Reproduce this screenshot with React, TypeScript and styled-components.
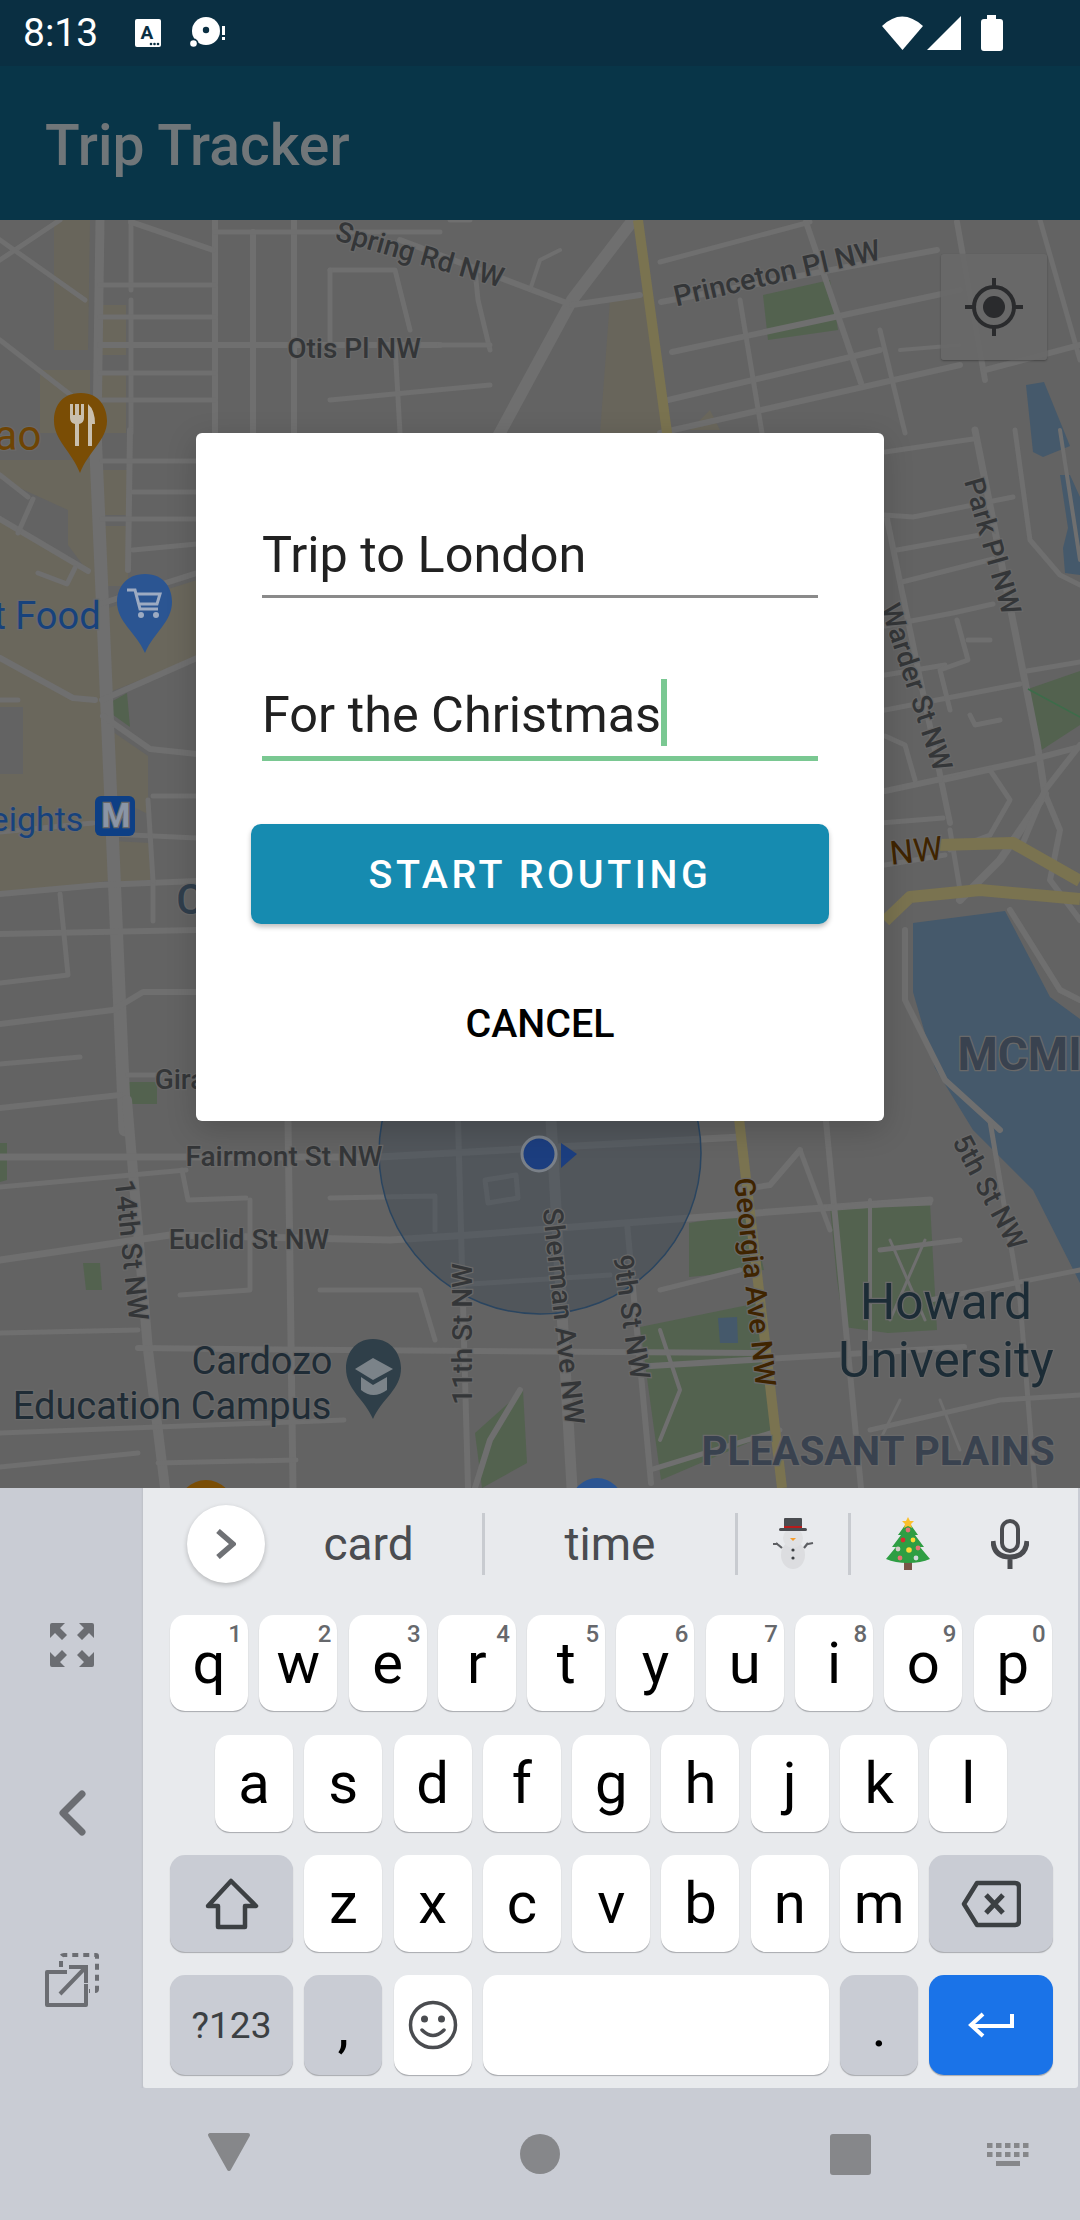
import React from 'react';
import styled, { createGlobalStyle } from 'styled-components';

const GlobalStyle = createGlobalStyle`
  html, body {
    margin: 0;
    padding: 0;
    background: #c9ccd4;
  }
  * {
    box-sizing: border-box;
  }
`;

const Page = styled.div`
  width: 1080px;
  height: 2220px;
  display: flex;
  flex-direction: column;
  overflow: hidden;
  font-family: Roboto, 'Liberation Sans', sans-serif;
`;

const StatusBar = styled.div`
  height: 66px;
  flex: none;
  display: flex;
  align-items: center;
  padding: 0 77px 0 23px;
  background: #0a2f42;
  color: #fff;
`;

const Clock = styled.span`
  font-size: 39px;
  line-height: 66px;
  margin-right: 37px;
`;

const StatusGlyph = styled.svg<{ $ml?: number; $mr?: number }>`
  flex: none;
  margin-left: ${(p) => p.$ml || 0}px;
  margin-right: ${(p) => p.$mr || 0}px;
`;

const StatusRight = styled.div`
  display: flex;
  align-items: center;
  margin-left: auto;
  gap: 4px;
`;

const AppBar = styled.div`
  height: 154px;
  flex: none;
  display: flex;
  align-items: center;
  padding: 5px 45px 0;
  background: #083548;
  color: #707679;
  font-size: 57px;
  font-weight: 500;
`;

const MapArea = styled.div`
  position: relative;
  height: 1268px;
  flex: none;
  background: #636363;
  overflow: hidden;
`;

const MapSvg = styled.svg`
  display: block;
  width: 1080px;
  height: 1268px;
`;

const MapLabel = styled.text<{ $size?: number; $color?: string; $weight?: number }>`
  font-family: Roboto, 'Liberation Sans', sans-serif;
  font-size: ${(p) => p.$size || 28}px;
  font-weight: ${(p) => p.$weight || 500};
  fill: ${(p) => p.$color || '#343638'};
  stroke: #696969;
  stroke-width: 2.5px;
  paint-order: stroke;
  text-anchor: middle;
`;

const LocateButton = styled.div`
  position: absolute;
  top: 34px;
  left: 941px;
  width: 106px;
  height: 106px;
  display: flex;
  align-items: center;
  justify-content: center;
  background: rgba(104, 104, 104, 0.92);
  border-radius: 3px;
  box-shadow: 0 1px 2px rgba(0, 0, 0, 0.3);
`;

const Dialog = styled.div`
  position: absolute;
  top: 213px;
  left: 196px;
  width: 688px;
  height: 688px;
  display: flex;
  flex-direction: column;
  padding: 89px 55px 0;
  background: #fff;
  border-radius: 6px;
  box-shadow: 0 8px 30px rgba(0, 0, 0, 0.18);
`;

const Field = styled.div<{ $focused?: boolean }>`
  height: ${(p) => (p.$focused ? 80 : 76)}px;
  margin: ${(p) => (p.$focused ? '83px' : '0')} 11px 0;
  display: flex;
  align-items: flex-end;
  padding-bottom: ${(p) => (p.$focused ? 13 : 12)}px;
  border-bottom: ${(p) => (p.$focused ? '5px solid #7ac892' : '3px solid #8a8a8a')};
  color: #212121;
  font-size: 50.4px;
  line-height: 56px;
`;

const Caret = styled.span`
  display: inline-block;
  width: 6px;
  height: 67px;
  margin: 0 0 -3px 0;
  background: #7ac892;
`;

const PrimaryButton = styled.button`
  height: 100px;
  margin-top: 63px;
  border: 0;
  border-radius: 10px;
  background: #168bb0;
  color: #fff;
  font-family: inherit;
  font-size: 39.4px;
  font-weight: 500;
  letter-spacing: 3.6px;
  box-shadow: 0 3px 5px rgba(0, 0, 0, 0.25);
`;

const TextButton = styled.button`
  height: 100px;
  margin-top: 49px;
  border: 0;
  background: transparent;
  color: #000;
  font-family: inherit;
  font-size: 39.4px;
  font-weight: 500;
`;

const Keyboard = styled.div`
  height: 600px;
  flex: none;
  display: flex;
  background: #c9ccd4;
`;

const SidePanel = styled.div`
  width: 143px;
  flex: none;
  display: flex;
  flex-direction: column;
  align-items: center;
  padding-top: 135px;
  box-shadow: inset -2px 0 2px -1px rgba(0, 0, 0, 0.06);
`;

const SideIcon = styled.div<{ $gap: number }>`
  display: flex;
  margin-top: ${(p) => p.$gap}px;
`;

const KeyPanel = styled.div`
  flex: 1;
  margin-right: 2px;
  background: #e8eaed;
  border-radius: 0 0 3px 3px;
`;

const Suggestions = styled.div`
  height: 127px;
  position: relative;
  display: flex;
  align-items: flex-start;
  padding-top: 25px;
  color: #4a4c50;
  font-size: 46px;
`;

const MoreCircle = styled.div`
  width: 78px;
  height: 78px;
  margin: -8px 0 0 44px;
  flex: none;
  display: flex;
  align-items: center;
  justify-content: center;
  border-radius: 50%;
  background: #fff;
  box-shadow: 0 2px 5px rgba(0, 0, 0, 0.22);
`;

const Suggestion = styled.div<{ $width: number; $pad?: number }>`
  width: ${(p) => p.$width}px;
  height: 62px;
  flex: none;
  display: flex;
  align-items: center;
  justify-content: center;
  padding-right: ${(p) => p.$pad || 0}px;
  line-height: 62px;
`;

const StripDivider = styled.div`
  width: 3px;
  height: 62px;
  flex: none;
  background: #c8cbd0;
`;

const KeyRow = styled.div<{ $indent: number; $mt: number }>`
  display: flex;
  gap: 11.3px;
  margin: ${(p) => p.$mt}px 0 0 ${(p) => p.$indent}px;
`;

const Key = styled.div<{ $w?: number; $h?: number; $tone?: 'plain' | 'dark' | 'blue'; $low?: boolean }>`
  position: relative;
  width: ${(p) => p.$w || 78}px;
  height: ${(p) => p.$h || 97}px;
  flex: none;
  display: flex;
  align-items: ${(p) => (p.$low ? 'flex-end' : 'center')};
  justify-content: center;
  border-radius: 15px;
  background: ${(p) => (p.$tone === 'dark' ? '#c9ccd4' : p.$tone === 'blue' ? '#1a73e8' : '#fff')};
  box-shadow: 0 1.5px 1px -0.5px #a8aaae;
  color: #000;
  font-size: 58px;
  line-height: 97px;
`;

const KeyHint = styled.span`
  position: absolute;
  top: 5px;
  right: 6px;
  color: #66686c;
  font-size: 24px;
  font-weight: 500;
  line-height: 28px;
`;

const SymbolLabel = styled.span`
  color: #3c4043;
  font-size: 37px;
`;

const NavBar = styled.div`
  height: 132px;
  flex: none;
  position: relative;
  display: flex;
  align-items: flex-start;
  padding: 44px 50px 0 207px;
  background: #c9ccd4;
`;

const NavSlot = styled.div<{ $ml?: number; $mt?: number }>`
  display: flex;
  margin-left: ${(p) => p.$ml || 0}px;
  margin-top: ${(p) => p.$mt || 0}px;
`;

const SignalIcons = () => (
  <StatusRight>
    <StatusGlyph width="41" height="34" viewBox="0 0 41 34">
      <path d="M0 10 Q20 -9 41 10 L20.5 34 Z" fill="#fff" />
    </StatusGlyph>
    <StatusGlyph width="34" height="34" viewBox="0 0 34 34">
      <path d="M34 0 V34 H0 Z" fill="#fff" />
    </StatusGlyph>
    <StatusGlyph width="22" height="36" viewBox="0 0 22 36" $ml={16}>
      <path d="M6 0 H15 V4 H19 Q22 4 22 7 V33 Q22 36 19 36 H3 Q0 36 0 33 V7 Q0 4 3 4 H6 Z" fill="#fff" />
    </StatusGlyph>
  </StatusRight>
);

const Food = () => (
  <g>
    <path d="M81 393 C60 393 54 408 54 421 C54 440 72 452 80 473 C88 452 107 440 107 421 C107 408 100 393 81 393 Z" fill="#7a4d05" />
    <path d="M70 404 V418 Q70 423 75 424 V446 H79 V424 Q84 423 84 418 V404 H81 V415 H79 V404 H75 V415 H73 V404 Z M88 404 Q95 410 95 424 H92 V446 H88 Z" fill="#c9bfae" />
  </g>
);

const Cart = () => (
  <g>
    <path d="M145 574 C125 574 117 589 117 602 C117 622 136 632 145 653 C154 632 172 622 172 602 C172 589 165 574 145 574 Z" fill="#2b5592" />
    <path d="M127 590 H135 L140 609 H158 M137 594 H160 L157 604 H140" stroke="#9dabc2" strokeWidth="3" fill="none" />
    <circle cx="141" cy="615" r="3" fill="#9dabc2" />
    <circle cx="156" cy="615" r="3" fill="#9dabc2" />
  </g>
);

const School = () => (
  <g>
    <path d="M373 1339 C354 1339 346 1355 346 1368 C346 1390 364 1398 373 1419 C382 1398 401 1390 401 1368 C401 1355 392 1339 373 1339 Z" fill="#2f3f49" />
    <path d="M373 1358 L393 1369 L373 1380 L355 1369 Z" fill="#7b8389" />
    <path d="M361 1377 V1390 Q373 1400 387 1390 V1377 L373 1385 Z" fill="#7b8389" />
  </g>
);

// main streets: [points, stroke width]
const ROADS: [string, number][] = [
  // top band
  ['100,220 97,433', 9], ['131,220 131,290', 5], ['131,300 131,433', 5], ['215,220 215,433', 6], ['253,232 253,433', 6],
  ['294,220 294,433', 6], ['60,220 0,260', 5], ['131,222 213,250', 6], ['0,240 85,300', 5], ['0,340 90,410', 5],
  ['100,285 215,285', 5], ['100,317 215,317', 5], ['100,345 440,345', 6], ['100,373 215,373', 5], ['100,400 215,400', 5],
  ['215,232 440,232', 5], ['330,270 395,270 410,330', 5], ['330,270 330,345', 5], ['395,345 400,433', 5],
  ['633,220 572,300 496,440', 12], ['400,240 572,305', 6], ['572,305 640,295', 6], ['470,220 450,220', 5], ['530,290 540,260 560,250', 4],
  ['490,350 478,300 475,270', 5], ['440,345 490,345', 5], ['330,400 490,385', 5],
  ['661,302 937,250', 6], ['660,262 810,222', 5], ['672,352 960,290', 6], ['668,400 880,350', 6], ['660,433 960,365', 6],
  ['806,222 861,383', 6], ['957,222 985,380', 6], ['1040,220 1080,360', 5], ['880,330 905,433', 5], ['740,300 762,433', 5],
  ['985,370 1080,345', 6], ['900,350 960,345', 4],
  // left band
  ['95,430 125,1130', 13], ['130,430 128,570', 6], ['102,461 197,461', 5], ['102,519 197,519', 5], ['133,492 197,492', 5],
  ['133,550 197,544', 5], ['0,519 88,571', 6], ['0,475 28,497', 5], ['33,499 18,533', 5], ['38,573 67,584 75,568', 5],
  ['0,658 73,698 95,700', 6], ['102,700 197,658', 6], ['100,604 197,573', 6], ['103,716 150,749 197,754', 6],
  ['0,894 100,885 197,881', 6], ['0,934 197,930', 6], ['60,894 68,975 0,983', 5], ['0,1024 113,1010 143,992 197,992', 6],
  ['0,1064 80,1057', 5], ['0,1108 120,1095', 6], ['128,1075 160,1075', 5], ['153,881 153,921', 5], ['153,796 197,796', 5],
  ['110,834 197,838', 5], ['0,832 93,823', 5], ['148,800 153,881', 5], ['0,700 18,700', 5],
  // right band
  ['975,430 1037,742 1045,794', 7], ['887,519 950,823', 6], ['885,452 973,439', 5], ['885,515 913,517 1013,497', 5],
  ['897,550 980,535', 5], ['902,582 993,559', 5], ['885,626 953,613 993,604', 5], ['880,711 1020,684', 5],
  ['1027,671 1080,662', 5], ['885,791 1030,760 1080,747', 6], ['880,823 943,818', 5], ['885,675 945,665', 5],
  ['885,736 905,745 915,780', 5], ['957,620 968,660 940,670 950,710', 5], ['968,640 990,640', 5], ['970,715 975,725 1000,720', 5],
  ['1060,430 1080,560', 4], ['1015,430 1030,540 1060,575 1080,585', 5], ['1045,794 1000,860 960,900', 8], ['1045,794 1060,830 1050,880 1080,920', 6],
  ['1080,745 1045,790 1020,850', 6], ['1010,910 1060,990 1080,1000', 6], ['905,930 905,1000 945,1080 1000,1130', 6],
  ['950,830 960,890', 5], ['945,780 990,770 1010,800 990,835 950,850', 5], ['885,865 945,855', 5],
  // bottom band
  ['127,1100 148,1350 165,1488', 10], ['288,1120 293,1488', 7], ['458,1120 468,1488', 6], ['551,1120 572,1488', 11],
  ['627,1223 651,1483', 6], ['826,1121 861,1488', 6], ['990,1121 1020,1300 1035,1488', 5],
  ['0,1157 379,1157 740,1137', 7], ['0,1187 186,1170', 5], ['0,1260 170,1235 390,1240 470,1235 690,1218 930,1200', 7],
  ['0,1333 138,1330', 5], ['138,1348 344,1350 757,1353', 6], ['634,1367 964,1347', 6], ['0,1433 344,1420', 5],
  ['0,1467 138,1453', 5], ['158,1463 296,1460', 5], ['485,1180 516,1175 518,1198 488,1203 485,1180', 5],
  ['182,1170 188,1200 246,1198', 5], ['330,1198 435,1196 435,1230', 5], ['320,1290 420,1290 435,1340', 5], ['180,1295 250,1290 250,1200', 5],
  ['455,1285 610,1275', 5], ['660,1290 740,1270', 5], ['880,1250 960,1240', 5], ['830,1207 930,1203', 5],
  ['740,1190 770,1185 800,1150', 6], ['800,1150 830,1230', 5], ['870,1200 870,1340', 4], ['890,1240 925,1320', 3], ['925,1240 890,1320', 3],
  ['930,1300 1080,1270', 5], ['870,1430 1000,1400 1080,1395', 5], ['900,1400 880,1440', 3], ['940,1400 960,1450', 3],
  ['520,1390 490,1440 475,1488', 6], ['650,1470 780,1430', 5], ['660,1330 680,1390 660,1440', 4],
];

const Map = () => (
  <MapSvg viewBox="0 220 1080 1268">
    {/* land use */}
    <polygon points="0,460 95,460 115,880 0,895" fill="#6a675c" />
    <polygon points="0,479 68,510 68,545 88,572 0,519" fill="#636363" />
    <rect x="0" y="707" width="23" height="67" fill="#636363" />
    <polygon points="102,610 197,580 197,658 102,695" fill="#6a675c" />
    <polygon points="103,725 148,756 148,814 110,796" fill="#6a675c" />
    <polygon points="113,841 150,843 150,881 113,885" fill="#6a675c" />
    <rect x="102" y="470" width="26" height="45" fill="#6a675c" />
    <rect x="102" y="526" width="26" height="60" fill="#6a675c" />
    <polygon points="40,370 90,370 90,433 40,433" fill="#6a675c" />
    <polygon points="54,220 90,220 88,350 54,350" fill="#68655b" />
    <polygon points="102,305 126,305 126,355 102,355" fill="#6a675c" />
    <polygon points="102,375 126,375 126,433 102,433" fill="#6a675c" />
    <polygon points="610,300 650,290 665,433 600,433" fill="#68655b" />
    <polygon points="690,430 720,430 710,410" fill="#6a675c" />
    {/* parks */}
    <g fill="#53624f">
      <polygon points="763,295 830,280 838,330 768,340" />
      <polygon points="102,707 127,693 130,727" />
      <polygon points="128,1082 157,1082 157,1104 130,1104" />
      <polygon points="1028,689 1080,671 1080,725 1040,751" />
      <polygon points="689,1223 751,1213 764,1270 689,1277" />
      <polygon points="640,1327 758,1303 771,1433 661,1480" />
      <polygon points="475,1433 523,1390 527,1463 482,1488" />
      <polygon points="830,1207 930,1203 937,1330 888,1333 844,1327 837,1280" />
      <polygon points="83,1263 100,1263 102,1290 86,1290" />
      <polygon points="0,1143 7,1143 7,1180 0,1182" />
    </g>
    {/* water */}
    <g fill="#45596b">
      <polygon points="1026,385 1044,382 1070,446 1043,457 1033,452" />
      <polygon points="1060,475 1070,475 1080,497 1080,575 1065,573 1063,548 1068,528" />
      <polygon points="913,923 1005,911 1050,997 1080,1019 1080,1283 1033,1190 973,1130 935,1068 913,992" />
      <polygon points="718,1318 737,1317 738,1343 720,1343" />
    </g>
    {/* streets */}
    <g fill="none" stroke="#6f6f6f" strokeLinecap="round" strokeLinejoin="round">
      {ROADS.map(([points, width], i) => (
        <polyline key={i} points={points} strokeWidth={width} />
      ))}
    </g>
    {/* arterials */}
    <g fill="none" stroke="#7a7350" strokeLinejoin="round">
      <polyline points="638,220 668,440" strokeWidth="10" />
      <polyline points="738,1110 782,1488" strokeWidth="10" />
      <polyline points="885,921 910,897 980,890 1080,899" strokeWidth="12" />
      <polyline points="937,845 1013,843 1080,881" strokeWidth="12" />
    </g>
    <line x1="1028" y1="689" x2="1080" y2="717" stroke="#3c6d4a" strokeWidth="1.5" />

    {/* my location */}
    <circle cx="540" cy="1153" r="161" fill="#3a4652" fillOpacity="0.42" stroke="#2a4560" strokeWidth="1.5" />
    <circle cx="539" cy="1154" r="17" fill="#1c3e7f" stroke="#7a8088" strokeWidth="3" />
    <polygon points="561,1143 577,1154 561,1168" fill="#1c3e7f" />

    <Food />
    <Cart />
    <School />
    <circle cx="206" cy="1508" r="28" fill="#7a4d05" />
    <circle cx="597" cy="1504" r="26" fill="#2b5592" />
    <rect x="95" y="796" width="40" height="40" rx="6" fill="#0d3f85" />

    <MapLabel x="116" y="827" $size={33} $color="#8a95a6" $weight={700}>M</MapLabel>
    <MapLabel x="420" y="264" transform="rotate(16 420 254)">Spring Rd NW</MapLabel>
    <MapLabel x="777" y="283" transform="rotate(-13 777 273)" $size={29}>Princeton Pl NW</MapLabel>
    <MapLabel x="354" y="358">Otis Pl NW</MapLabel>
    <MapLabel x="18" y="450" $size={42} $color="#6e4404" $weight={400}>ao</MapLabel>
    <MapLabel x="47" y="629" $size={38} $color="#17427c" $weight={400}>t Food</MapLabel>
    <MapLabel x="37" y="831" $size={34} $color="#17427c" $weight={400}>eights</MapLabel>
    <MapLabel x="916" y="862" transform="rotate(-6 916 850)" $size={33} $color="#3f2400" $weight={400}>NW</MapLabel>
    <MapLabel x="180" y="1089">Gira</MapLabel>
    <MapLabel x="190" y="914" $size={42} $color="#303e4c">C</MapLabel>
    <MapLabel x="993" y="556" transform="rotate(74 993 546)">Park Pl NW</MapLabel>
    <MapLabel x="917" y="697" transform="rotate(72 917 687)">Warder St NW</MapLabel>
    <MapLabel x="1032" y="1070" $size={46} $color="#39424f" $weight={700}>MCMIL</MapLabel>
    <MapLabel x="284" y="1166">Fairmont St NW</MapLabel>
    <MapLabel x="249" y="1249">Euclid St NW</MapLabel>
    <MapLabel x="132" y="1260" transform="rotate(84 132 1250)">14th St NW</MapLabel>
    <MapLabel x="462" y="1344" transform="rotate(-90 462 1334)">11th St NW</MapLabel>
    <MapLabel x="564" y="1326" transform="rotate(84 564 1316)">Sherman Ave NW</MapLabel>
    <MapLabel x="632" y="1327" transform="rotate(82 632 1317)">9th St NW</MapLabel>
    <MapLabel x="755" y="1292" transform="rotate(84 755 1282)" $size={29} $color="#3f2400">Georgia Ave NW</MapLabel>
    <MapLabel x="990" y="1202" transform="rotate(62 990 1192)">5th St NW</MapLabel>
    <MapLabel x="946" y="1319" $size={49.5} $color="#1c2c36" $weight={400}>Howard</MapLabel>
    <MapLabel x="946" y="1377" $size={49.5} $color="#1c2c36" $weight={400}>University</MapLabel>
    <MapLabel x="262" y="1374" $size={38} $color="#1f2c36" $weight={400}>Cardozo</MapLabel>
    <MapLabel x="172" y="1419" $size={38} $color="#1f2c36" $weight={400}>Education Campus</MapLabel>
    <MapLabel x="878" y="1465" $size={40.5} $color="#39424f" $weight={700}>PLEASANT PLAINS</MapLabel>
  </MapSvg>
);

const Snowman = () => (
  <svg width="42" height="54" viewBox="0 0 42 54">
    <ellipse cx="21" cy="38" rx="12" ry="14" fill="#dcdde0" />
    <circle cx="21" cy="21" r="10" fill="#e0e1e3" />
    <rect x="12" y="1" width="18" height="11" rx="1" fill="#4a4c50" />
    <rect x="7" y="11" width="28" height="3" rx="1.5" fill="#4a4c50" />
    <rect x="12" y="9" width="18" height="2" fill="#b71c1c" />
    <path d="M18 21 L21 24 L24 21 Z" fill="#f59c2a" />
    <path d="M4 26 L10 31 M36 26 L32 31 M1 27 L6 27 M41 26 L36 27" stroke="#5d5f63" strokeWidth="2.2" />
    <circle cx="21" cy="33" r="1.6" fill="#3c4043" />
    <circle cx="21" cy="41" r="1.6" fill="#3c4043" />
  </svg>
);

const Tree = () => (
  <svg width="46" height="54" viewBox="0 0 46 54">
    <rect x="19" y="44" width="8" height="9" fill="#795548" />
    <path d="M23 4 L33 18 L30 18 L39 30 L35 30 L45 42 Q36 46 23 46 Q10 46 1 42 L11 30 L7 30 L16 18 L13 18 Z" fill="#2e9e43" />
    <path d="M23 0 L25 4 L29 4 L26 7 L27 11 L23 9 L19 11 L20 7 L17 4 L21 4 Z" fill="#fbc02d" />
    <circle cx="23" cy="13" r="2.4" fill="#e57373" />
    <circle cx="18" cy="23" r="2.4" fill="#d32f2f" />
    <circle cx="28" cy="23" r="2.4" fill="#fdd835" />
    <circle cx="13" cy="32" r="2.4" fill="#d7ccc8" />
    <circle cx="24" cy="33" r="2.8" fill="#fdd835" />
    <circle cx="33" cy="31" r="2.4" fill="#e57373" />
    <circle cx="15" cy="41" r="2.4" fill="#e57373" />
    <circle cx="31" cy="41" r="2.4" fill="#cfd8dc" />
  </svg>
);

const TOP_ROW: [string, string][] = [
  ['q', '1'], ['w', '2'], ['e', '3'], ['r', '4'], ['t', '5'], ['y', '6'], ['u', '7'], ['i', '8'], ['o', '9'], ['p', '0'],
];

const App: React.FC = () => {
  return (
    <Page>
      <GlobalStyle />
      <StatusBar>
        <Clock>8:13</Clock>
        <StatusGlyph width="26" height="28" viewBox="0 0 26 28" $mr={29}>
          <rect width="26" height="28" rx="2" fill="#fff" />
          <text x="12" y="20" fontFamily="Roboto" fontWeight="700" fontSize="19" textAnchor="middle" fill="#0a2f42">A</text>
          <circle cx="16" cy="25" r="1.3" fill="#0a2f42" />
          <circle cx="19.5" cy="25" r="1.3" fill="#0a2f42" />
          <circle cx="23" cy="25" r="1.3" fill="#0a2f42" />
        </StatusGlyph>
        <StatusGlyph width="36" height="32" viewBox="0 0 36 32">
          <circle cx="16" cy="14" r="14" fill="#fff" />
          <circle cx="16" cy="13" r="3.2" fill="#0a2f42" />
          <circle cx="3.5" cy="26.5" r="5" fill="#0a2f42" />
          <circle cx="3.5" cy="26.5" r="3.3" fill="#fff" />
          <rect x="32" y="9" width="3" height="9" fill="#fff" />
          <rect x="32" y="20" width="3" height="3" fill="#fff" />
        </StatusGlyph>
        <SignalIcons />
      </StatusBar>
      <AppBar>Trip Tracker</AppBar>
      <MapArea>
        <Map />
        <LocateButton>
          <svg width="60" height="60" viewBox="0 0 60 60" fill="none" stroke="#2a2b2d">
            <circle cx="30" cy="30" r="20" strokeWidth="4" />
            <circle cx="30" cy="30" r="11" fill="#2a2b2d" strokeWidth="0" />
            <path d="M30 1 V11 M30 49 V59 M1 30 H11 M49 30 H59" strokeWidth="4" />
          </svg>
        </LocateButton>
        <Dialog>
          <Field>Trip to London</Field>
          <Field $focused>
            For the Christmas
            <Caret />
          </Field>
          <PrimaryButton>START ROUTING</PrimaryButton>
          <TextButton>CANCEL</TextButton>
        </Dialog>
      </MapArea>
      <Keyboard>
        <SidePanel>
          <SideIcon $gap={0}>
            <svg width="44" height="44" viewBox="0 0 44 44" fill="#6b6d72">
              <path d="M0 2 Q0 0 2 0 H15 L10 5 L17 12 L12 17 L5 10 L0 15 Z" />
              <path d="M44 2 Q44 0 42 0 H29 L34 5 L27 12 L32 17 L39 10 L44 15 Z" />
              <path d="M0 42 Q0 44 2 44 H15 L10 39 L17 32 L12 27 L5 34 L0 29 Z" />
              <path d="M44 42 Q44 44 42 44 H29 L34 39 L27 32 L32 27 L39 34 L44 29 Z" />
            </svg>
          </SideIcon>
          <SideIcon $gap={123}>
            <svg width="28" height="46" viewBox="0 0 28 46" fill="none" stroke="#6b6d72" strokeWidth="7" strokeLinecap="round" strokeLinejoin="round">
              <path d="M24 4 L5 23 L24 42" />
            </svg>
          </SideIcon>
          <SideIcon $gap={117}>
            <svg width="54" height="54" viewBox="0 0 54 54" fill="none" stroke="#6b6d72" strokeWidth="4">
              <path d="M22 19 H2 V52 H41 V31" strokeLinejoin="round" />
              <path d="M15 41 L39 16 M24 14 H41 V30" />
              <path d="M16 14 V5 Q16 2 19 2 H51 Q52 2 52 3 V36 Q52 38 50 38 H44" strokeDasharray="6 5" />
            </svg>
          </SideIcon>
        </SidePanel>
        <KeyPanel>
          <Suggestions>
            <MoreCircle>
              <svg width="20" height="30" viewBox="0 0 20 30" fill="none" stroke="#6f7175" strokeWidth="5.5">
                <path d="M2 2 L17 15 L2 28" />
              </svg>
            </MoreCircle>
            <Suggestion $width={217} $pad={10}>card</Suggestion>
            <StripDivider />
            <Suggestion $width={250}>time</Suggestion>
            <StripDivider />
            <Suggestion $width={110}>
              <Snowman />
            </Suggestion>
            <StripDivider />
            <Suggestion $width={113}>
              <Tree />
            </Suggestion>
            <Suggestion $width={92}>
              <svg width="38" height="50" viewBox="0 0 38 50" fill="none" stroke="#4a4c50" strokeWidth="4">
                <rect x="11" y="2" width="16" height="30" rx="8" />
                <path d="M2 22 Q3 38 19 38 Q35 38 36 22 M19 38 V50" strokeWidth="5" />
              </svg>
            </Suggestion>
          </Suggestions>
          <KeyRow $indent={27} $mt={0}>
            {TOP_ROW.map(([letter, hint]) => (
              <Key key={letter} $h={96}>
                {letter}
                <KeyHint>{hint}</KeyHint>
              </Key>
            ))}
          </KeyRow>
          <KeyRow $indent={72} $mt={24}>
            {'asdfghjkl'.split('').map((letter) => (
              <Key key={letter}>{letter}</Key>
            ))}
          </KeyRow>
          <KeyRow $indent={27} $mt={23}>
            <Key $w={123} $tone="dark">
              <svg width="54" height="52" viewBox="0 0 54 52" fill="none" stroke="#3c4043" strokeWidth="4.5" strokeLinejoin="round">
                <path d="M26 3 L51 28 H40 V49 H13 V28 H3 Z" />
              </svg>
            </Key>
            {'zxcvbnm'.split('').map((letter) => (
              <Key key={letter}>{letter}</Key>
            ))}
            <Key $w={124} $tone="dark">
              <svg width="60" height="48" viewBox="0 0 60 48" fill="none" stroke="#3c4043" strokeWidth="4.5" strokeLinejoin="round">
                <path d="M16 3 H54 Q58 3 58 7 V41 Q58 45 54 45 H16 L3 24 Z" />
                <path d="M25 15 L42 33 M42 15 L25 33" strokeWidth="5" />
              </svg>
            </Key>
          </KeyRow>
          <KeyRow $indent={27} $mt={23}>
            <Key $w={123} $h={100} $tone="dark">
              <SymbolLabel>?123</SymbolLabel>
            </Key>
            <Key $h={100} $tone="dark" $low>,</Key>
            <Key $h={100}>
              <svg width="50" height="50" viewBox="0 0 50 50" fill="none" stroke="#4a4c50" strokeWidth="3.5">
                <circle cx="25" cy="25" r="22.5" />
                <circle cx="16.5" cy="19" r="3.5" fill="#4a4c50" stroke="none" />
                <circle cx="33.5" cy="19" r="3.5" fill="#4a4c50" stroke="none" />
                <path d="M14 30 Q25 41 36 30" strokeLinecap="round" />
              </svg>
            </Key>
            <Key $w={346} $h={100} />
            <Key $h={100} $tone="dark" $low>.</Key>
            <Key $w={124} $h={100} $tone="blue">
              <svg width="46" height="28" viewBox="0 0 46 28" fill="none" stroke="#fff" strokeWidth="4">
                <path d="M44 3 V15 H5 M15 3 L3 14 L15 25" />
              </svg>
            </Key>
          </KeyRow>
        </KeyPanel>
      </Keyboard>
      <NavBar>
        <NavSlot>
          <svg width="44" height="40" viewBox="0 0 44 40" fill="#86878a" stroke="#86878a" strokeWidth="4" strokeLinejoin="round">
            <path d="M3 3 H41 L22 37 Z" />
          </svg>
        </NavSlot>
        <NavSlot $ml={269} $mt={2}>
          <svg width="40" height="40" viewBox="0 0 40 40">
            <circle cx="20" cy="20" r="20" fill="#86878a" />
          </svg>
        </NavSlot>
        <NavSlot $ml={270} $mt={2}>
          <svg width="41" height="41" viewBox="0 0 41 41">
            <rect width="41" height="41" rx="3" fill="#86878a" />
          </svg>
        </NavSlot>
        <NavSlot $ml={116} $mt={11}>
          <svg width="42" height="23" viewBox="0 0 42 23" fill="#86878a">
            {[0, 9, 18, 27, 36].map((x) => (
              <React.Fragment key={x}>
                <rect x={x} y="0" width="5.5" height="5" />
                <rect x={x} y="9" width="5.5" height="5" />
              </React.Fragment>
            ))}
            <rect x="9" y="18" width="24" height="5" />
          </svg>
        </NavSlot>
      </NavBar>
    </Page>
  );
};

export default App;
